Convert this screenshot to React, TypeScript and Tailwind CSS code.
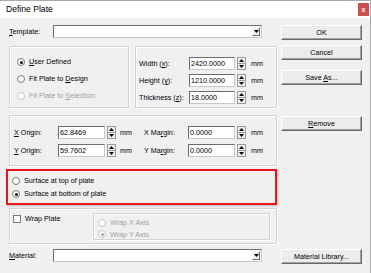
import React from "react";

const lbl = "font-['Liberation_Sans',Arial,sans-serif] text-[7.2px] leading-none text-black";

function U({ children }: { children: React.ReactNode }) {
  return <span className="underline underline-offset-[1px]">{children}</span>;
}

function Radio({
  checked,
  disabled,
  children,
}: {
  checked?: boolean;
  disabled?: boolean;
  children: React.ReactNode;
}) {
  return (
    <div className="flex h-[10px] items-center">
      <span
        className={`flex h-[8px] w-[8px] items-center justify-center rounded-full border bg-white ${
          disabled ? "border-[#c4c4c4]" : "border-[#7a7a7a]"
        }`}
      >
        {checked && (
          <span className={`h-[3px] w-[3px] rounded-full ${disabled ? "bg-[#a0a0a0]" : "bg-black"}`} />
        )}
      </span>
      <span className={`ml-[4px] ${disabled ? "text-[#a0a0a0]" : ""}`}>{children}</span>
    </div>
  );
}

function Arrow({ up }: { up?: boolean }) {
  return (
    <svg width="5" height="3" viewBox="0 0 5 3">
      <path d={up ? "M0 3 L2.5 0 L5 3 Z" : "M0 0 L5 0 L2.5 3 Z"} fill="#000" />
    </svg>
  );
}

function NumField({ value, w = 47 }: { value: string; w?: number }) {
  return (
    <div className="flex h-[13px] items-center">
      <div
        className={`flex h-[13px] items-center border border-t-[#6d6d6d] border-l-[#6d6d6d] border-r-[#c8c8c8] border-b-[#c8c8c8] bg-white pl-[1px] ${
          w === 46 ? "w-[46px]" : "w-[47px]"
        }`}
      >
        {value}
      </div>
      <div className="ml-[2px] flex h-[13px] w-[9px] flex-col border border-[#9a9a9a] bg-[#efefef]">
        <div className="flex flex-1 items-center justify-center border-b border-[#9a9a9a]">
          <Arrow up />
        </div>
        <div className="flex flex-1 items-center justify-center">
          <Arrow />
        </div>
      </div>
    </div>
  );
}

function Combo() {
  return (
    <div className="flex h-[13px] w-[209px] items-center justify-end border border-t-[#6d6d6d] border-l-[#6d6d6d] border-r-[#c8c8c8] border-b-[#c8c8c8] bg-white pr-[1px]">
      <div className="flex h-[9px] w-[8px] items-center justify-center border border-t-white border-l-white border-r-[#6a6a6a] border-b-[#6a6a6a] bg-[#ececec]">
        <Arrow />
      </div>
    </div>
  );
}

function Btn({ children, className = "" }: { children: React.ReactNode; className?: string }) {
  return (
    <div
      className={`flex h-[15px] w-[81px] items-center justify-center border border-t-white border-l-white border-r-[#696969] border-b-[#696969] bg-[#ececec] shadow-[inset_-1px_-1px_0_#a0a0a0] ${className}`}
    >
      {children}
    </div>
  );
}

function Group({ className = "", children }: { className?: string; children?: React.ReactNode }) {
  return (
    <div className={`border border-[#d3d3d3] shadow-[inset_1px_1px_0_#fff,1px_1px_0_#fff] ${className}`}>
      {children}
    </div>
  );
}

export default function App() {
  return (
    <div className={`${lbl} flex h-[273px] w-[371px] flex-col overflow-hidden border-r border-t border-[#a9a9a9] bg-[#f0f0f0]`}>
      <div className="flex h-[17px] items-center bg-white pl-[6px] pr-[1px]">
        <span className="text-[8.6px]">Define Plate</span>
        <div className="ml-auto flex h-[13px] w-[11px] items-center justify-center bg-[#c9504f] text-[7px] font-bold text-white">
          x
        </div>
      </div>

      <div className="flex pl-[9px]">
        <div className="flex w-[268px] flex-col">
          <div className="mt-[7px] flex h-[13px] items-center">
            <span className="w-[44px]">
              <U>T</U>emplate:
            </span>
            <Combo />
          </div>

          <div className="mt-[8px] flex h-[62px]">
            <Group className="w-[120px] pl-[7px] pt-[10px]">
              <div className="flex flex-col gap-[7px]">
                <Radio checked>
                  <U>U</U>ser Defined
                </Radio>
                <Radio>
                  Fit Plate to <U>D</U>esign
                </Radio>
                <Radio disabled>
                  Fit Plate to <U>S</U>election
                </Radio>
              </div>
            </Group>
            <Group className="ml-[6px] w-[142px] pl-[3px] pt-[10px]">
              <div className="flex flex-col gap-[4px]">
                {[
                  ["Width (", "x", "):", "2420.0000"],
                  ["Height (", "y", "):", "1210.0000"],
                  ["Thickness (", "z", "):", "18.0000"],
                ].map(([a, b, c, v]) => (
                  <div key={a} className="flex h-[13px] items-center">
                    <span className="w-[50px]">
                      {a}
                      <U>{b}</U>
                      {c}
                    </span>
                    <NumField value={v} w={46} />
                    <span className="ml-[5px]">mm</span>
                  </div>
                ))}
              </div>
            </Group>
          </div>

          <Group className="mt-[7px] h-[51px] pl-[4px] pt-[10px]">
            <div className="flex flex-col gap-[5px]">
              {[
                ["X", "62.8469", "X Ma", "r", "gin:", "0.0000"],
                ["Y", "59.7602", "Y Ma", "r", "gin:", "0.0000"],
              ].map(([k, v, m1, m2, m3, mv]) => (
                <div key={k} className="flex h-[13px] items-center">
                  <span className="w-[44px]">
                    <U>{k}</U> Origin:
                  </span>
                  <NumField value={v} />
                  <span className="ml-[4px] w-[24px]">mm</span>
                  <span className="w-[44px]">
                    {m1}
                    <U>{m2}</U>
                    {m3}
                  </span>
                  <NumField value={mv} />
                  <span className="ml-[5px]">mm</span>
                </div>
              ))}
            </div>
          </Group>

          <div className="-ml-[3px] mt-[3px] flex h-[36px] w-[271px] flex-col gap-[3px] border-2 border-[#e8161c] pl-[4px] pt-[5px] shadow-[1px_1px_2px_rgba(0,0,0,0.25)]">
            <Radio>Surface at top of plate</Radio>
            <Radio checked>Surface at bottom of plate</Radio>
          </div>

          <Group className="mt-[3px] flex h-[36px] pl-[3px] pt-[4px]">
            <div className="mt-[2px] flex h-[8px] w-[80px] items-center">
              <span className="h-[8px] w-[8px] border border-[#7a7a7a] bg-white" />
              <span className="ml-[4px]">Wrap Plate</span>
            </div>
            <Group className="flex h-[27px] w-[177px] flex-col gap-[2px] pl-[4px] pt-[4px]">
              <Radio disabled>Wrap X Axis</Radio>
              <Radio disabled checked>
                Wrap Y Axis
              </Radio>
            </Group>
          </Group>

          <div className="mt-[5px] flex h-[13px] items-center">
            <span className="w-[44px]">
              <U>M</U>aterial:
            </span>
            <Combo />
          </div>
        </div>

        <div className="ml-[4px] flex flex-col">
          <Btn className="mt-[7px]">OK</Btn>
          <Btn className="mt-[5px]">Cancel</Btn>
          <Btn className="mt-[10px]">
            <span>
              Save <U>A</U>s...
            </span>
          </Btn>
          <Btn className="mt-[31px]">
            <span>
              <U>R</U>emove
            </span>
          </Btn>
          <Btn className="mt-[118px]">Material Library...</Btn>
        </div>
      </div>
    </div>
  );
}
